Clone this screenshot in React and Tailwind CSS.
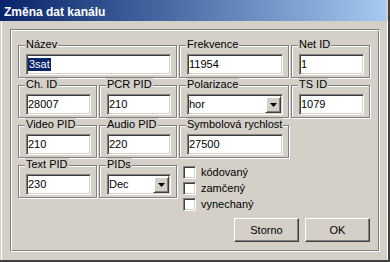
import React from 'react';

const sunken = "border border-t-[#808080] border-l-[#808080] border-r-white border-b-white bg-white shadow-[inset_1px_1px_0_#404040,inset_-1px_-1px_0_#d4d0c8]";
const raised = "border border-t-white border-l-white border-r-[#404040] border-b-[#404040] bg-[#d4d0c8] shadow-[inset_-1px_-1px_0_#808080]";

const Group = ({ label, className, children }) => (
    <div className={`relative border border-[#808080] shadow-[inset_1px_1px_0_#fff,1px_1px_0_#fff] pt-[8px] pb-[2px] pl-[7px] pr-[5px] ${className}`}>
        <span className="absolute -top-[8px] left-[6px] bg-[#d4d0c8] px-[1px] leading-[13px] whitespace-nowrap">{label}</span>
        {children}
    </div>
);

const Field = ({ children }) => (
    <div className={`h-[21px] flex items-center pl-[1px] ${sunken}`}>{children}</div>
);

const Combo = ({ value }) => (
    <div className={`h-[21px] flex items-center pl-[1px] pr-[1px] ${sunken}`}>
        <span className="flex-1">{value}</span>
        <span className={`w-[16px] h-[17px] flex items-center justify-center ${raised} border-t-[#d4d0c8] border-l-[#d4d0c8] shadow-[inset_1px_1px_0_#fff,inset_-1px_-1px_0_#808080]`}>
            <svg width="7" height="4" viewBox="0 0 7 4"><path d="M0 0h7L3.5 4z" fill="#000" /></svg>
        </span>
    </div>
);

const Check = ({ label }) => (
    <div className="h-[16px] flex items-center gap-[5px]">
        <span className={`w-[13px] h-[13px] ${sunken}`} />
        <span className="leading-[13px]">{label}</span>
    </div>
);

const Button = ({ children }) => (
    <button className={`w-[65px] h-[24px] flex items-center justify-center ${raised}`}>{children}</button>
);

export default function App() {
    return (
        <div className="w-[390px] h-[262px] bg-[#d4d0c8] border-r-2 border-b-2 border-[#404040] text-[11px] text-black font-['Liberation_Sans',Arial,sans-serif] overflow-hidden">
            <div className="h-[21px] w-[386px] flex items-center pt-[2px] pl-[4px] bg-gradient-to-r from-[#0a246a] to-[#a6caf0] text-white text-[12px] font-bold">
                Změna dat kanálu
            </div>
            <div className="ml-[1px] h-[239px] border-l border-white border-r border-[#808080] pt-[8px] pl-[8px]">
                <div className="w-[370px] h-[223px] border border-t-[#808080] border-l-[#808080] border-r-white border-b-white">
                    <div className="h-full border border-t-white border-l-white border-r-[#808080] border-b-[#808080] pt-[14px] pl-[6px] flex flex-col gap-[7px]">
                        <div className="flex gap-[2px]">
                            <Group label="Název" className="w-[159px]">
                                <Field><span className="inline-block bg-[#0a246a] text-white px-[1px] leading-[13px]">3sat</span></Field>
                            </Group>
                            <Group label="Frekvence" className="w-[110px]"><Field>11954</Field></Group>
                            <Group label="Net ID" className="w-[79px]"><Field>1</Field></Group>
                        </div>
                        <div className="flex gap-[2px]">
                            <Group label="Ch. ID" className="w-[79px]"><Field>28007</Field></Group>
                            <Group label="PCR PID" className="w-[78px]"><Field>210</Field></Group>
                            <Group label="Polarizace" className="w-[110px]"><Combo value="hor" /></Group>
                            <Group label="TS ID" className="w-[79px]"><Field>1079</Field></Group>
                        </div>
                        <div className="flex gap-[2px]">
                            <Group label="Video PID" className="w-[79px]"><Field>210</Field></Group>
                            <Group label="Audio PID" className="w-[78px]"><Field>220</Field></Group>
                            <Group label="Symbolová rychlost" className="w-[110px]"><Field>27500</Field></Group>
                        </div>
                        <div className="flex items-start gap-[2px]">
                            <Group label="Text PID" className="w-[79px]"><Field>230</Field></Group>
                            <Group label="PIDs" className="w-[78px]"><Combo value="Dec" /></Group>
                            <div className="-mt-[1px] pl-[4px] flex flex-col">
                                <Check label="kódovaný" />
                                <Check label="zamčený" />
                                <Check label="vynechaný" />
                            </div>
                        </div>
                        <div className="w-[352px] -mt-[1px] flex justify-end gap-[6px]">
                            <Button>Storno</Button>
                            <Button>OK</Button>
                        </div>
                    </div>
                </div>
            </div>
        </div>
    );
}
